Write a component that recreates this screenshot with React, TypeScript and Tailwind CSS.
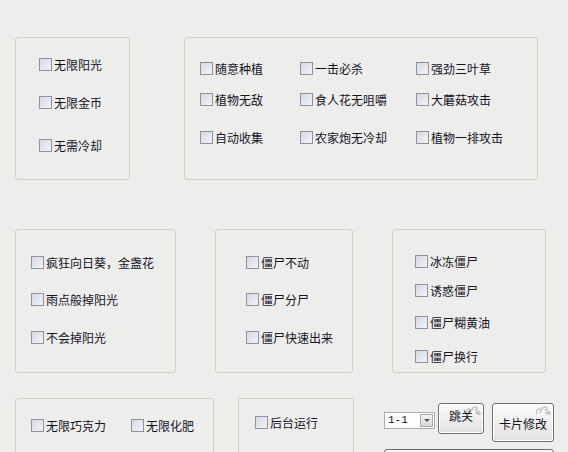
import React from 'react';

const FONT = "font-['SimSun','Noto_Sans_CJK_SC',sans-serif]";

function Check({ label }: { label: string }) {
  return (
    <div className="flex h-[13px] items-center gap-[2px] whitespace-nowrap">
      <span className="box-border h-[13px] w-[13px] shrink-0 border border-[#8a92a4] bg-gradient-to-br from-[#d6d9e0] to-[#f2f3f6]" />
      <span className="text-[12px] leading-[13px] text-[#14141f]">{label}</span>
    </div>
  );
}

function Swirl() {
  return (
    <svg className="absolute right-[1px] top-[1px]" width="18" height="13" viewBox="0 0 18 13" fill="none" stroke="#bcbcbc" strokeWidth="1.3">
      <path d="M3 9 C1 7 3 3 6 4 C8 5 7 8 5 7" />
      <path d="M8 5 C8 2 12 1 13 3 C14 5 11 6 11 4" />
      <path d="M12 9 C12 6 16 6 16 8 C16 10 13 10 14 8" />
    </svg>
  );
}

function Box({ className, children }: { className: string; children?: React.ReactNode }) {
  return <div className={`box-border rounded-[3px] border border-[#d1d1c0] ${className}`}>{children}</div>;
}

export default function App() {
  return (
    <div className={`h-[452px] w-[568px] overflow-hidden bg-[#ededeb] pl-[15px] pt-[37px] ${FONT}`}>
      {/* row 1 */}
      <div className="flex gap-[54px]">
        <Box className="flex h-[143px] w-[115px] flex-col pl-[23px] pt-[20px]">
          <Check label="无限阳光" />
          <div className="mt-[25px]"><Check label="无限金币" /></div>
          <div className="mt-[30px]"><Check label="无需冷却" /></div>
        </Box>
        <Box className="grid h-[143px] w-[354px] grid-cols-[100px_116px_1fr] grid-rows-[13px_13px_13px] content-start gap-y-0 pl-[15px] pt-[24px]">
          <Check label="随意种植" />
          <Check label="一击必杀" />
          <Check label="强劲三叶草" />
          <div className="mt-[18px]"><Check label="植物无敌" /></div>
          <div className="mt-[18px]"><Check label="食人花无咀嚼" /></div>
          <div className="mt-[18px]"><Check label="大蘑菇攻击" /></div>
          <div className="mt-[43px]"><Check label="自动收集" /></div>
          <div className="mt-[43px]"><Check label="农家炮无冷却" /></div>
          <div className="mt-[43px]"><Check label="植物一排攻击" /></div>
        </Box>
      </div>

      {/* row 2 */}
      <div className="mt-[49px] flex gap-[39px]">
        <Box className="flex h-[144px] w-[161px] flex-col pl-[15px] pt-[26px]">
          <Check label="疯狂向日葵，金盏花" />
          <div className="mt-[24px]"><Check label="雨点般掉阳光" /></div>
          <div className="mt-[25px]"><Check label="不会掉阳光" /></div>
        </Box>
        <Box className="flex h-[144px] w-[138px] flex-col pl-[30px] pt-[26px]">
          <Check label="僵尸不动" />
          <div className="mt-[24px]"><Check label="僵尸分尸" /></div>
          <div className="mt-[25px]"><Check label="僵尸快速出来" /></div>
        </Box>
        <Box className="flex h-[144px] w-[154px] flex-col pl-[22px] pt-[25px]">
          <Check label="冰冻僵尸" />
          <div className="mt-[16px]"><Check label="诱惑僵尸" /></div>
          <div className="mt-[19px]"><Check label="僵尸糊黄油" /></div>
          <div className="mt-[21px]"><Check label="僵尸换行" /></div>
        </Box>
      </div>

      {/* row 3 */}
      <div className="mt-[25px] flex">
        <Box className="flex h-[80px] w-[199px] gap-0 pl-[15px] pt-[20px]">
          <div className="w-[100px]"><Check label="无限巧克力" /></div>
          <Check label="无限化肥" />
        </Box>
        <Box className="ml-[24px] h-[80px] w-[116px] pl-[16px] pt-[17px]">
          <Check label="后台运行" />
        </Box>
        <div className="ml-[30px] flex flex-col pt-[5px]">
          <div className="flex items-start">
            <div className="relative mt-[9px] box-border flex h-[17px] w-[51px] items-center border border-[#a5acb5] bg-white pl-[3px]">
              <span className="font-['Liberation_Mono',monospace] text-[11px] leading-none text-[#111]">1-1</span>
              <span className="absolute right-[1px] top-[1px] box-border flex h-[13px] w-[13px] items-center justify-center border border-[#a9a9a9] bg-gradient-to-b from-[#f4f4f4] to-[#d8d8d8]">
                <span className="h-0 w-0 border-x-[3px] border-t-[3px] border-x-transparent border-t-[#555]" />
              </span>
            </div>
            <div className="relative ml-[3px] box-border flex h-[31px] w-[46px] justify-center rounded-[3px] border border-[#6f6f6f] bg-gradient-to-b from-[#fbfbfb] to-[#e2e2e2] pt-[5px] shadow-[inset_0_0_0_1px_#ffffff]">
              <Swirl />
              <span className="relative text-[12px] leading-[14px] text-[#14141f]">跳关</span>
            </div>
            <div className="relative ml-[8px] box-border flex h-[39px] w-[62px] items-center justify-center rounded-[3px] border border-[#6f6f6f] bg-gradient-to-b from-[#fbfbfb] to-[#e2e2e2] pt-[2px] shadow-[inset_0_0_0_1px_#ffffff]">
              <Swirl />
              <span className="relative text-[12px] leading-[14px] text-[#14141f]">卡片修改</span>
            </div>
          </div>
          <div className="relative mt-[7px] box-border h-[24px] w-[170px] rounded-[3px] border border-[#6f6f6f] bg-gradient-to-b from-[#fbfbfb] to-[#e2e2e2]">
            <Swirl />
          </div>
        </div>
      </div>
    </div>
  );
}
